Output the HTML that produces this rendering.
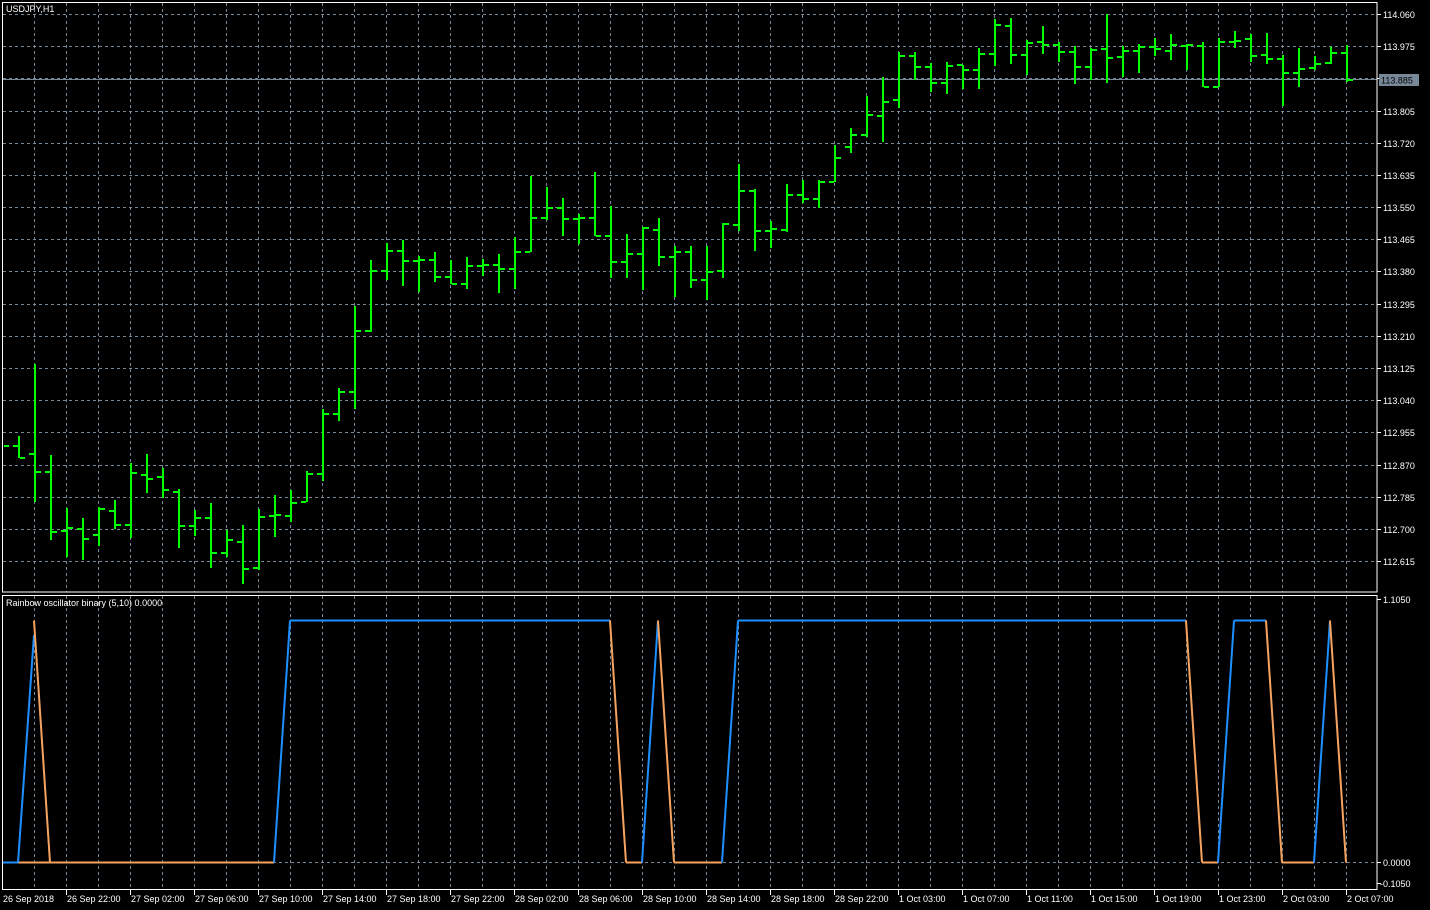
<!DOCTYPE html>
<html><head><meta charset="utf-8"><style>
html,body{margin:0;padding:0;background:#000;width:1430px;height:910px;overflow:hidden}
svg{display:block}
text{font-family:"Liberation Sans",sans-serif;font-size:9px;fill:#fff}
</style></head><body>
<svg id="s" width="1430" height="910" xmlns="http://www.w3.org/2000/svg"></svg>
<script>
var s='';
var G='#778899';
// vertical grid
for(var x=34.5;x<1377;x+=32){s+='<line x1="'+x+'" y1="3" x2="'+x+'" y2="592" stroke="'+G+'" stroke-dasharray="3,3"/>';s+='<line x1="'+x+'" y1="596" x2="'+x+'" y2="889" stroke="'+G+'" stroke-dasharray="3,3"/>';}
// horizontal grid & labels
var p=114.060;
for(var i=0;i<18;i++){var y=Math.round(14+i*32.18)+0.5;s+='<line x1="3" y1="'+y+'" x2="1377" y2="'+y+'" stroke="'+G+'" stroke-dasharray="3,3"/>';s+='<line x1="1377" y1="'+y+'" x2="1381" y2="'+y+'" stroke="#fff"/>';s+='<text x="1383" y="'+(y+3.5)+'">'+(p-i*0.085).toFixed(3)+'</text>';}
// current price line
s+='<line x1="3" y1="79.5" x2="1377" y2="79.5" stroke="'+G+'"/>';
s+='<rect x="1379" y="74" width="40" height="12" fill="'+G+'"/><text x="1381" y="83.5" fill="#000" style="fill:#000">113.885</text>';
// bars [x,H,L,O,C]
var b=[[2,440,452,446,446],[18,436,458,446,458],[34,364,502,454,472],[50,455,540,472,532],[66,508,557,531,528],[82,518,560,529,539],[98,507,546,535,509],[114,500,529,511,525],[130,463,538,525,473],[146,454,493,475,479],[162,468,498,477,490],[178,489,548,492,526],[194,510,536,526,518],[210,503,568,518,553],[226,530,557,553,540],[242,525,584,542,569],[258,509,570,568,517],[274,495,537,516,515],[290,490,522,516,503],[306,471,502,502,474],[322,409,481,474,414],[338,388,421,414,392],[354,306,409,392,331],[370,260,332,331,271],[386,243,280,271,251],[402,240,286,251,261],[418,256,292,261,260],[434,252,282,260,277],[450,260,284,277,284],[466,257,289,284,266],[482,259,276,266,265],[498,254,293,265,269],[514,237,289,269,252],[530,176,252,252,218],[546,187,220,218,208],[562,198,236,208,219],[578,214,244,219,218],[594,172,236,218,236],[610,206,278,236,262],[626,234,278,262,254],[642,227,290,254,228],[658,218,266,230,257],[674,246,297,257,252],[690,246,288,252,280],[706,246,300,280,272],[722,223,278,271,224],[738,164,231,225,191],[754,189,251,191,231],[770,221,248,231,229],[786,184,232,230,195],[802,180,203,195,199],[818,180,208,199,182],[834,145,182,182,158],[850,128,153,147,135],[866,96,137,135,115],[882,77,142,116,102],[898,52,108,100,56],[914,52,80,56,67],[930,63,92,67,83],[946,62,94,83,66],[962,65,89,65,70],[978,48,89,70,54],[994,19,66,54,25],[1010,18,64,26,55],[1026,40,75,55,43],[1042,26,54,42,45],[1058,42,62,45,52],[1074,46,84,52,67],[1090,48,80,67,50],[1106,14,83,49,58],[1122,46,77,57,51],[1138,44,73,51,47],[1154,38,56,47,49],[1170,34,60,51,45],[1186,44,70,46,45],[1202,42,87,46,87],[1218,38,87,87,42],[1234,31,48,42,41],[1250,34,62,39,56],[1266,33,64,55,59],[1282,55,106,59,73],[1298,48,87,73,69],[1314,56,70,68,64],[1330,47,64,63,53],[1346,45,82,53,80]];
var C='#00ff00';
b.forEach(function(r){var x=r[0];
 if(x>3)s+='<rect x="'+x+'" y="'+r[1]+'" width="2" height="'+(r[2]-r[1])+'" fill="'+C+'"/>';
 s+='<rect x="'+(x-5)+'" y="'+(r[3]-1)+'" width="'+(x>3?5:5)+'" height="2" fill="'+C+'"/>';
 s+='<rect x="'+(x+2)+'" y="'+(r[4]-1)+'" width="5" height="2" fill="'+C+'"/>';});
// cover left overflow
s+='<rect x="0" y="0" width="2" height="910" fill="#000"/>';
// frames
s+='<rect x="2.5" y="2.5" width="1374.5" height="589.5" fill="none" stroke="#fff"/>';
s+='<rect x="2.5" y="595.5" width="1374.5" height="294" fill="none" stroke="#fff"/>';
s+='<text x="6" y="12">USDJPY,H1</text>';
s+='<text x="6" y="606">Rainbow oscillator binary (5,10) 0.0000</text>';
// indicator scale
s+='<line x1="1377" y1="599.5" x2="1381" y2="599.5" stroke="#fff"/><text x="1383" y="603">1.1050</text>';
s+='<line x1="3" y1="862.5" x2="1377" y2="862.5" stroke="'+G+'" stroke-dasharray="3,3"/>';
s+='<line x1="1377" y1="862.5" x2="1381" y2="862.5" stroke="#fff"/><text x="1383" y="866">0.0000</text>';
s+='<line x1="1377" y1="883.5" x2="1381" y2="883.5" stroke="#fff"/><text x="1380" y="887">-0.1050</text>';
// indicator lines
var T=620.5,Z=862.5,B='#1e90ff',O='#f4a460';
function L(x1,y1,x2,y2,c){s+='<line x1="'+x1+'" y1="'+y1+'" x2="'+x2+'" y2="'+y2+'" stroke="'+c+'" stroke-width="2"/>';}
L(3,Z,50,Z,O);L(3,Z,18,Z,B);L(18,Z,34,635,B);L(34,T,50,Z,O);
L(50,Z,274,Z,O);L(274,Z,290,T,B);L(290,T,610,T,B);L(610,T,626,Z,O);
L(626,Z,642,Z,O);L(642,Z,658,T,B);L(658,T,674,Z,O);
L(674,Z,722,Z,O);L(722,Z,738,T,B);L(738,T,1186,T,B);L(1186,T,1202,Z,O);
L(1202,Z,1218,Z,O);L(1218,Z,1234,T,B);L(1234,T,1266,T,B);L(1266,T,1282,Z,O);
L(1282,Z,1314,Z,O);L(1314,Z,1330,T,B);L(1330,T,1346,Z,O);
// time axis
var t=['26 Sep 2018','26 Sep 22:00','27 Sep 02:00','27 Sep 06:00','27 Sep 10:00','27 Sep 14:00','27 Sep 18:00','27 Sep 22:00','28 Sep 02:00','28 Sep 06:00','28 Sep 10:00','28 Sep 14:00','28 Sep 18:00','28 Sep 22:00','1 Oct 03:00','1 Oct 07:00','1 Oct 11:00','1 Oct 15:00','1 Oct 19:00','1 Oct 23:00','2 Oct 03:00','2 Oct 07:00'];
t.forEach(function(l,i){var x=2+64*i;if(i>0)s+='<line x1="'+(x+0.5)+'" y1="890" x2="'+(x+0.5)+'" y2="895" stroke="#fff"/>';s+='<text x="'+(x+1)+'" y="902">'+l+'</text>';});
document.getElementById('s').innerHTML=s;
</script>
</body></html>
